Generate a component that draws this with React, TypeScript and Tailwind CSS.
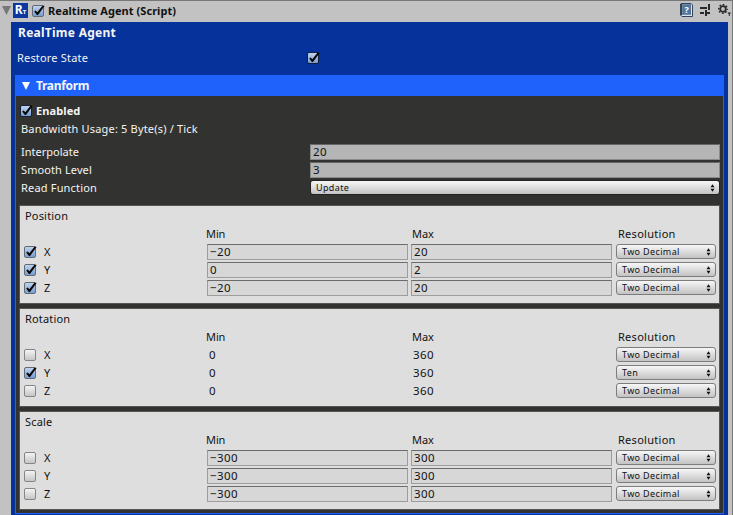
import React from "react";

type Axis = { axis: string; on: boolean; min: string; max: string; res: string };

function Check({ on, dark }: { on: boolean; dark?: boolean }) {
  const border = dark ? "border-[#14203a]" : on ? "border-[#626a76]" : "border-[#858585]";
  const fill = on ? "from-[#c0d3ed] to-[#769dd0]" : "from-[#f4f4f4] to-[#c6c6c6]";
  return (
    <span className={`relative block size-3 shrink-0 rounded-[2px] border bg-linear-to-b ${border} ${fill}`}>
      {on && (
        <svg className="absolute -top-px -left-px" width="13" height="12" viewBox="0 0 13 12">
          <path d="M2.2 6.6 L3.6 5.6 L5.4 7.3 L10.6 0.6 L12.6 1 L6 10 L4.9 10 Z" fill="#060606" />
        </svg>
      )}
    </span>
  );
}

function Arrows() {
  return (
    <svg className="shrink-0" width="5" height="8" viewBox="0 0 5 8" fill="#111">
      <path d="M2.5 0.3 L4.5 3.3 H0.5 Z M2.5 7.7 L0.5 4.7 H4.5 Z" />
    </svg>
  );
}

function Select({ value, dark }: { value: string; dark?: boolean }) {
  return (
    <div
      className={
        (dark ? "border-[#222321]" : "border-[#7d7d7d]") +
        " flex h-[15px] items-center justify-between rounded-[3px] border bg-linear-to-b from-[#f7f7f7] to-[#c3c3c3] pr-[4px] pl-[5px] text-[9px] leading-[13px] tracking-[0.36px] text-[#111]"
      }
    >
      <span>{value}</span>
      <Arrows />
    </div>
  );
}

function Field({ value, dark }: { value: string; dark?: boolean }) {
  return (
    <div
      className={
        (dark ? "border-[#8a8a8a] border-t-[#666] bg-[#b5b5b5]" : "border-[#9d9d9d] border-t-[#6a6a6a] bg-[#d7d7d7]") +
        " h-4 border pl-[2px] text-[11.5px] leading-[13px] tracking-[0.4px] text-[#111]"
      }
    >
      {value}
    </div>
  );
}

function Section({ title, rows, editable = true }: { title: string; rows: Axis[]; editable?: boolean }) {
  return (
    <section className="mb-[4px] h-[99px] border border-[#555653] bg-[#dedede] pt-px text-[#111]">
      <h3 className="h-[18px] pl-[5px] leading-[18px]">{title}</h3>
      <div className="grid h-[18px] grid-cols-[186px_206px_206px_1fr] leading-[18px]">
        <span />
        <span className="tracking-[-0.1px]">Min</span>
        <span className="tracking-[-0.1px]">Max</span>
        <span className="tracking-[0.28px]">Resolution</span>
      </div>
      {rows.map((r) => (
        <div key={r.axis} className="grid h-[18px] grid-cols-[20px_163px_201px_201px_100px] items-center pl-[4px]">
          <Check on={r.on} />
          <span>{r.axis}</span>
          {editable ? <Field value={r.min} /> : <span className="pl-[2px] text-[11.5px] tracking-[0.4px]">{r.min}</span>}
          <div className="ml-[3px] w-[201px]">
            {editable ? <Field value={r.max} /> : <span className="pl-[2px] text-[11.5px] tracking-[0.4px]">{r.max}</span>}
          </div>
          <div className="mt-px ml-[7px] w-[100px] self-start">
            <Select value={r.res} />
          </div>
        </div>
      ))}
    </section>
  );
}

const two = "Two Decimal";

export default function App() {
  return (
    <div className="h-[515px] w-[733px] overflow-hidden border-t border-r border-[#777] bg-[#c2c2c2] font-['Noto_Sans','Open_Sans',sans-serif] text-[11px] tracking-[0.18px]">
      <header className="flex h-[21px] items-center pb-[3px]">
        <svg className="mt-px ml-[2px]" width="9" height="9" viewBox="0 0 9 9" fill="#777">
          <path d="M0 0 H9 L4.5 9 Z" />
        </svg>
        <span className="ml-[2px] flex size-[15px] items-center justify-center bg-[#0d37a0] text-xs leading-none font-bold tracking-normal text-white">
          R<span className="mt-[3px] text-[6px]">T</span>
        </span>
        <div className="mt-px ml-[4px]">
          <Check on />
        </div>
        <h1 className="mt-[2px] ml-[4px] font-bold tracking-[0.05px] text-[#111]">Realtime Agent (Script)</h1>
        <svg className="mr-[7px] ml-auto" width="13" height="14" viewBox="0 0 13 14">
          <path d="M1 0.5 H11 L12.5 2 V13.5 H2 L0.5 12 V1Z" fill="#dce4ec" stroke="#344356" />
          <path d="M0.5 1 H2.5 V12 H0.5Z" fill="#344356" />
          <rect x="2.5" y="1.2" width="8.5" height="10.6" fill="#56779c" />
          <text x="4.4" y="9.8" fontSize="9" fontWeight="bold" fill="#fff" letterSpacing="0">?</text>
        </svg>
        <svg className="mr-[7px]" width="11" height="12" viewBox="0 0 11 12" fill="#292929">
          <path d="M0 3H7V5H0Z M8 0H10V6H8Z M0 8H4V10H0Z M5 6H7V12H5Z M7 8H10V10H7Z" />
        </svg>
        <svg className="mr-px" width="13" height="12" viewBox="0 0 13 12">
          <circle cx="5" cy="5" r="2.8" fill="none" stroke="#292929" strokeWidth="1.8" />
          <circle cx="5" cy="5" r="4.3" fill="none" stroke="#292929" strokeWidth="1.5" strokeDasharray="1.7 1.677" strokeDashoffset="0.85" />
          <path d="M9.5 8.5H13L11.8 10.2V12H10.8V10.2Z" fill="#292929" />
        </svg>
      </header>
      <main className="ml-[11px] h-[493px] w-[717px] bg-[#06339b] px-[4px] text-[#f4f4f4]">
        <h2 className="h-[27px] pt-[2px] pl-[3px] text-xs leading-[18px] font-bold tracking-[0.26px]">RealTime Agent</h2>
        <div className="flex h-[26px] pl-[2px]">
          <span className="w-[290px] leading-[18px]">Restore State</span>
          <div className="pt-[3px]">
            <Check on dark />
          </div>
        </div>
        <div className="h-[439px] w-[709px] bg-[#1f61fb]">
          <div className="flex h-[21px] items-center pl-[7px]">
            <svg width="8" height="8" viewBox="0 0 8 8" fill="#fff">
              <path d="M0 0 H8 L4 8 Z" />
            </svg>
            <h2 className="ml-[6px] text-xs font-bold tracking-[-0.3px]">Tranform</h2>
          </div>
          <div className="mx-px h-[417px] bg-[#323330] px-[3px] pt-[6px]">
            <div className="flex h-[18px] items-center gap-[4px] pl-[1px]">
              <Check on dark />
              <span className="font-bold tracking-[0.1px]">Enabled</span>
            </div>
            <p className="h-[23px] pl-[2px] leading-[18px]">Bandwidth Usage: 5 Byte(s) / Tick</p>
            <div className="grid grid-cols-[289px_410px] pl-[2px] leading-[18px]">
              <span className="tracking-[0px]">Interpolate</span>
              <div className="pt-px">
                <Field value="20" dark />
              </div>
              <span className="tracking-[0.1px]">Smooth Level</span>
              <div className="pt-px">
                <Field value="3" dark />
              </div>
              <span>Read Function</span>
              <div className="pt-px">
                <Select value="Update" dark />
              </div>
            </div>
            <div className="h-[8px]" />
            <Section
              title="Position"
              rows={[
                { axis: "X", on: true, min: "−20", max: "20", res: two },
                { axis: "Y", on: true, min: "0", max: "2", res: two },
                { axis: "Z", on: true, min: "−20", max: "20", res: two },
              ]}
            />
            <Section
              title="Rotation"
              editable={false}
              rows={[
                { axis: "X", on: false, min: "0", max: "360", res: two },
                { axis: "Y", on: true, min: "0", max: "360", res: "Ten" },
                { axis: "Z", on: false, min: "0", max: "360", res: two },
              ]}
            />
            <Section
              title="Scale"
              rows={[
                { axis: "X", on: false, min: "−300", max: "300", res: two },
                { axis: "Y", on: false, min: "−300", max: "300", res: two },
                { axis: "Z", on: false, min: "−300", max: "300", res: two },
              ]}
            />
          </div>
        </div>
      </main>
    </div>
  );
}
